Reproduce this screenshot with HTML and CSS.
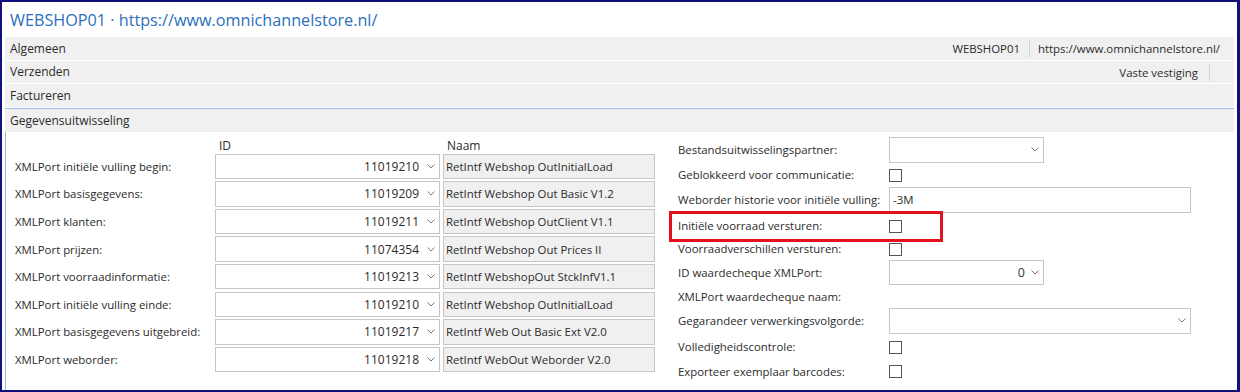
FILE: index.html
```html
<!DOCTYPE html>
<html lang="nl">
<head>
<meta charset="utf-8">
<title>WEBSHOP01</title>
<link rel="stylesheet" href="styles.css">
</head>
<body>
<div class="frame">
  <div class="title">WEBSHOP01 · https://www.omnichannelstore.nl/</div>
  <div class="tab"><span class="tab-name">Algemeen</span><span class="summary"><span class="sum-item">WEBSHOP01</span><span class="sum-item">https://www.omnichannelstore.nl/</span></span></div>
  <div class="tab"><span class="tab-name">Verzenden</span><span class="summary"><span class="sum-item sep-after">Vaste vestiging</span></span></div>
  <div class="tab"><span class="tab-name">Factureren</span></div>
  <div class="tab tab-open"><span class="tab-name">Gegevensuitwisseling</span></div>
  <div class="content">
    <div class="left-grid">
      <div></div><div class="col-head">ID</div><div class="col-head">Naam</div>

      <div class="lbl">XMLPort initiële vulling begin:</div>
      <div class="idbox"><span>11019210</span><svg class="chev" viewBox="0 0 8 5"><polyline points="0.5,0.5 4,4 7.5,0.5"/></svg></div>
      <div class="namebox">RetIntf Webshop OutInitialLoad</div>

      <div class="lbl">XMLPort basisgegevens:</div>
      <div class="idbox"><span>11019209</span><svg class="chev" viewBox="0 0 8 5"><polyline points="0.5,0.5 4,4 7.5,0.5"/></svg></div>
      <div class="namebox">RetIntf Webshop Out Basic V1.2</div>

      <div class="lbl">XMLPort klanten:</div>
      <div class="idbox"><span>11019211</span><svg class="chev" viewBox="0 0 8 5"><polyline points="0.5,0.5 4,4 7.5,0.5"/></svg></div>
      <div class="namebox">RetIntf Webshop OutClient V1.1</div>

      <div class="lbl">XMLPort prijzen:</div>
      <div class="idbox"><span>11074354</span><svg class="chev" viewBox="0 0 8 5"><polyline points="0.5,0.5 4,4 7.5,0.5"/></svg></div>
      <div class="namebox">RetIntf Webshop Out Prices II</div>

      <div class="lbl">XMLPort voorraadinformatie:</div>
      <div class="idbox"><span>11019213</span><svg class="chev" viewBox="0 0 8 5"><polyline points="0.5,0.5 4,4 7.5,0.5"/></svg></div>
      <div class="namebox">RetIntf WebshopOut StckInfV1.1</div>

      <div class="lbl">XMLPort initiële vulling einde:</div>
      <div class="idbox"><span>11019210</span><svg class="chev" viewBox="0 0 8 5"><polyline points="0.5,0.5 4,4 7.5,0.5"/></svg></div>
      <div class="namebox">RetIntf Webshop OutInitialLoad</div>

      <div class="lbl">XMLPort basisgegevens uitgebreid:</div>
      <div class="idbox"><span>11019217</span><svg class="chev" viewBox="0 0 8 5"><polyline points="0.5,0.5 4,4 7.5,0.5"/></svg></div>
      <div class="namebox">RetIntf Web Out Basic Ext V2.0</div>

      <div class="lbl">XMLPort weborder:</div>
      <div class="idbox"><span>11019218</span><svg class="chev" viewBox="0 0 8 5"><polyline points="0.5,0.5 4,4 7.5,0.5"/></svg></div>
      <div class="namebox">RetIntf WebOut Weborder V2.0</div>
    </div>

    <div class="right-grid">
      <div class="lbl">Bestandsuitwisselingspartner:</div>
      <div class="field"><div class="select short"><span></span><svg class="chev" viewBox="0 0 8 5"><polyline points="0.5,0.5 4,4 7.5,0.5"/></svg></div></div>

      <div class="lbl">Geblokkeerd voor communicatie:</div>
      <div class="field"><span class="check"></span></div>

      <div class="lbl">Weborder historie voor initiële vulling:</div>
      <div class="field"><div class="text long">-3M</div></div>

      <div class="lbl highlight-row">Initiële voorraad versturen:<span class="highlight"></span></div>
      <div class="field"><span class="check"></span></div>

      <div class="lbl">Voorraadverschillen versturen:</div>
      <div class="field"><span class="check"></span></div>

      <div class="lbl">ID waardecheque XMLPort:</div>
      <div class="field"><div class="select short"><span>0</span><svg class="chev" viewBox="0 0 8 5"><polyline points="0.5,0.5 4,4 7.5,0.5"/></svg></div></div>

      <div class="lbl">XMLPort waardecheque naam:</div>
      <div class="field"></div>

      <div class="lbl">Gegarandeer verwerkingsvolgorde:</div>
      <div class="field"><div class="select long"><span></span><svg class="chev" viewBox="0 0 8 5"><polyline points="0.5,0.5 4,4 7.5,0.5"/></svg></div></div>

      <div class="lbl">Volledigheidscontrole:</div>
      <div class="field"><span class="check"></span></div>

      <div class="lbl">Exporteer exemplaar barcodes:</div>
      <div class="field"><span class="check"></span></div>
    </div>
  </div>
</div>
</body>
</html>
```

FILE: styles.css
```css
* { box-sizing: border-box; }
html, body { margin: 0; padding: 0; background: #fff; }
body {
  font-family: "Open Sans", "Noto Sans", sans-serif;
  font-size: 11.4px;
  color: #2b2b2b;
}
.frame {
  width: 1240px;
  height: 392px;
  border: 2px solid #10107e;
  border-right-width: 3px;
  padding: 0 3px 0 3px;
  overflow: hidden;
}
.title {
  height: 35px;
  padding: 6px 0 0 5px;
  font-size: 16.2px;
  color: #2a6fbd;
  line-height: 24px;
}
.tab {
  height: 23.5px;
  background: #f0f0f0;
  border-bottom: 1px solid #fff;
  display: flex;
  align-items: center;
  justify-content: space-between;
  padding: 1px 0 0 5px;
  line-height: 20px;
}
.tab-name { font-size: 12px; }
.tab-open {
  border-top: 1px solid #9ab8ea;
  border-bottom: none;
  height: 24px;
}
.summary {
  display: flex;
  align-items: center;
  padding-right: 14px;
}
.sum-item { padding: 0 9px; line-height: 17px; }
.sum-item + .sum-item { border-left: 1px solid #d2d2d2; padding-left: 8px; padding-right: 0; }
.sep-after { border-right: 1px solid #d2d2d2; padding-right: 11px; margin-right: 10px; }

.content {
  border-left: 1px solid #9ab8ea;
  height: 262px;
  padding: 0 0 0 9px;
  display: flex;
  align-items: flex-start;
}
.left-grid {
  display: grid;
  grid-template-columns: 197px 225px 212px;
  grid-template-rows: 20px;
  grid-auto-rows: 25.4px;
  column-gap: 3px;
  row-gap: 2.2px;
}
.col-head {
  padding: 7px 0 0 4px;
  line-height: 14px;
  font-size: 12px;
}
.lbl {
  display: flex;
  align-items: center;
  white-space: nowrap;
}
.idbox {
  border: 1px solid #c6c6c6;
  background: #fff;
  display: flex;
  align-items: center;
  justify-content: flex-end;
  padding-right: 4px;
}
.idbox span { margin-right: 8px; font-size: 12px; }
.chev {
  width: 8px;
  height: 5px;
  fill: none;
  stroke: #777;
  stroke-width: 1;
}
.namebox {
  border: 1px solid #c6c6c6;
  background: #f0f0f0;
  display: flex;
  align-items: center;
  padding-left: 2px;
}

.right-grid {
  margin-left: 23px;
  margin-top: 5px;
  display: grid;
  grid-template-columns: 211px 320px;
  grid-template-rows: 26px 22px 26px 24px 20px 25px 21px 26px 24px 23px;
  row-gap: 1px;
}
.field {
  display: flex;
  align-items: center;
}
.select, .text {
  height: 100%;
  border: 1px solid #c6c6c6;
  background: #fff;
  display: flex;
  align-items: center;
}
.select {
  justify-content: flex-end;
  padding-right: 4px;
}
.select span { margin-right: 6px; font-size: 12.5px; color: #333; }
.short { width: 155px; }
.long { width: 302px; }
.text { padding-left: 3px; }
.check {
  width: 13px;
  height: 13px;
  border: 1px solid #555;
  background: #fff;
  margin-top: 1px;
}
.highlight-row { position: relative; }
.highlight {
  position: absolute;
  left: -9px;
  top: -3px;
  width: 274px;
  height: 31px;
  border: 3px solid #e3111d;
}
```
